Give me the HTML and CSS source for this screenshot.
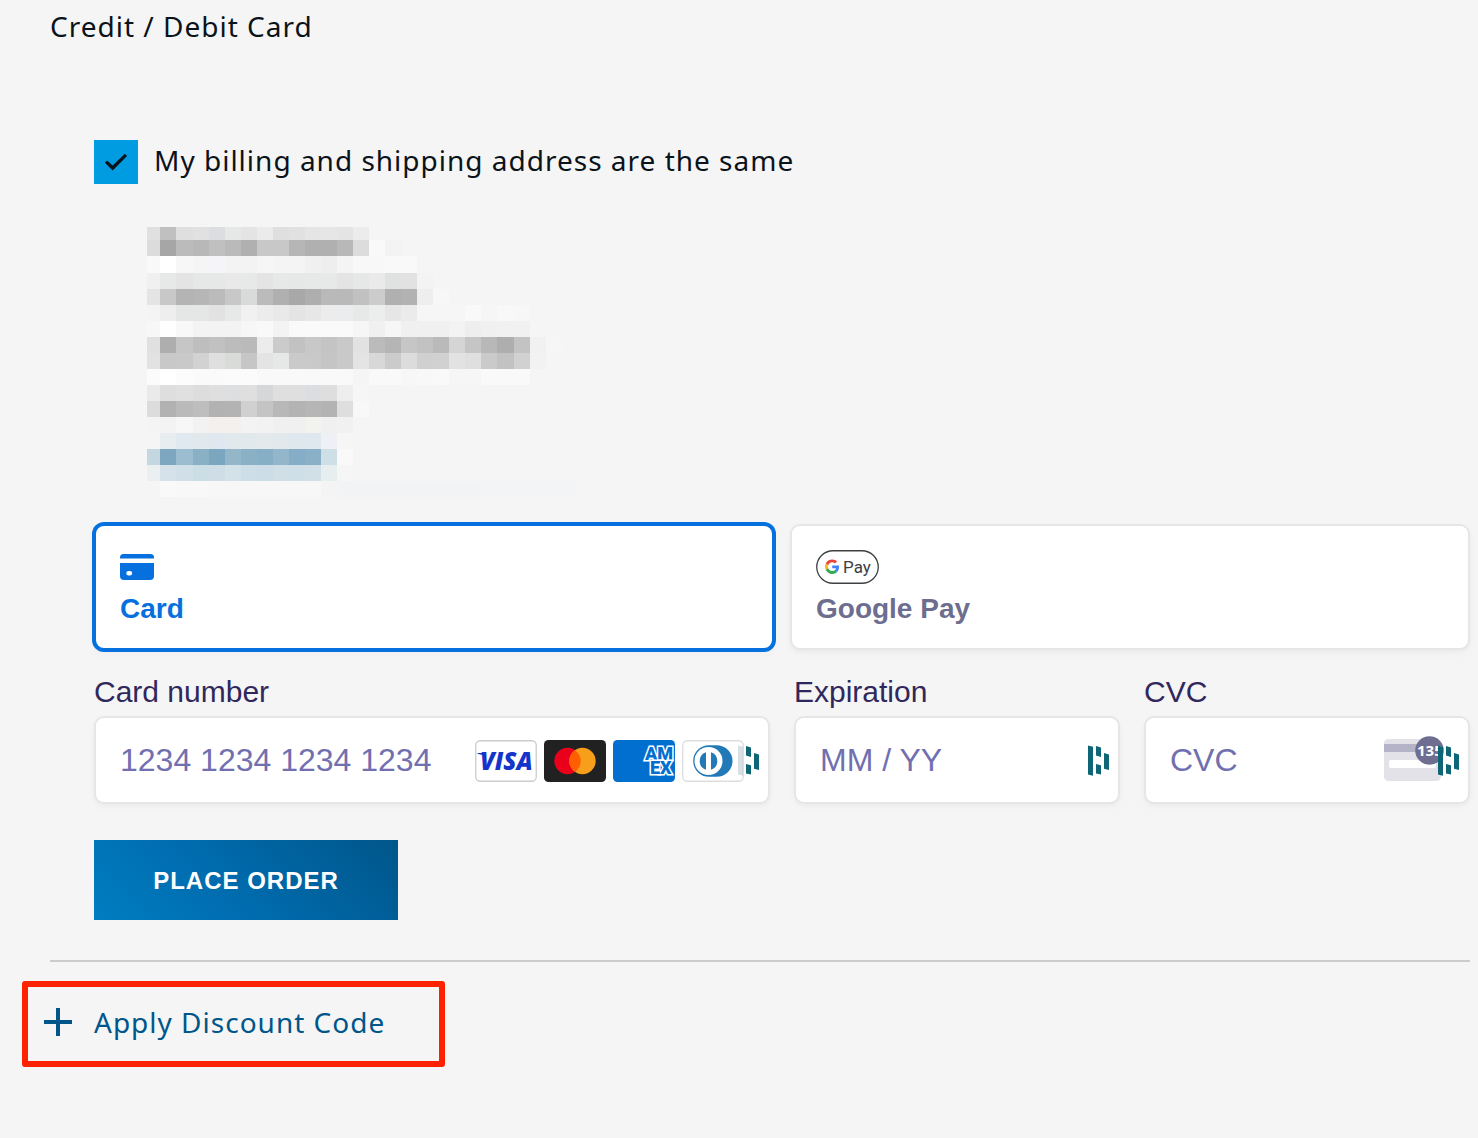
FILE: index.html
```html
<!DOCTYPE html>
<html lang="en">
<head>
  <meta charset="UTF-8" />
  <meta name="viewport" content="width=device-width, initial-scale=1" />
  <title>Checkout</title>
  <link rel="stylesheet" href="styles.css">
</head>
<body>
  <main class="checkout">
    <h1>Credit / Debit Card</h1>

    <form class="payment-form">
      <label class="same-address" for="sameAddress">
        <input type="checkbox" id="sameAddress" checked />
        My billing and shipping address are the same
      </label>

      <svg class="address" id="address" viewBox="0 0 430 270" role="img" aria-label="Hidden address"></svg>

      <div class="methods" role="tablist">
        <button type="button" class="method active" role="tab" aria-selected="true">
          <svg class="card-icon" viewBox="0 0 34 26" aria-hidden="true">
            <path d="M0 4.6V3.5Q0 0 3.500 0h27Q34 0 34 3.500v1.100z" />
            <path fill-rule="evenodd" d="M0 9h34v13q0 4-4 4H4q-4 0-4-4zM8.500 17h1.500a2.200 2.200 0 0 1 0 4.400h-1.500a2.200 2.200 0 0 1 0-4.400z" />
          </svg>
          <span>Card</span>
        </button>
        <button type="button" class="method" role="tab" aria-selected="false">
          <svg class="gpay-icon" viewBox="0 0 63 34" aria-hidden="true">
            <rect x=".75" y=".75" width="61.500" height="32.500" rx="16.250" fill="#fff" stroke="#3c4043" stroke-width="1.300" />
            <g transform="translate(9 9.500) scale(.3)">
              <path fill="#ea4335" d="M24 9.500c3.540 0 6.710 1.220 9.210 3.600l6.850-6.850C35.900 2.380 30.470 0 24 0 14.620 0 6.510 5.380 2.560 13.220l7.980 6.190C12.430 13.720 17.740 9.500 24 9.500z" />
              <path fill="#4285f4" d="M46.980 24.550c0-1.570-.15-3.090-.38-4.550H24v9.020h12.940c-.58 2.960-2.260 5.480-4.780 7.180l7.730 6c4.510-4.180 7.090-10.360 7.090-17.650z" />
              <path fill="#fbbc04" d="M10.530 28.590A14.500 14.500 0 0 1 9.770 24c0-1.600.27-3.140.76-4.590l-7.980-6.190A24 24 0 0 0 0 24c0 3.880.92 7.540 2.560 10.780z" />
              <path fill="#34a853" d="M24 48c6.480 0 11.930-2.130 15.890-5.810l-7.730-6c-2.150 1.450-4.920 2.300-8.160 2.300-6.260 0-11.570-4.220-13.470-9.910l-7.980 6.190C6.510 42.620 14.620 48 24 48z" />
            </g>
            <text x="27" y="23" class="gpay-text">Pay</text>
          </svg>
          <span>Google Pay</span>
        </button>
      </div>

      <div class="fields">
        <div class="field field-wide">
          <label for="cardNumber">Card number</label>
          <div class="control">
            <input type="text" id="cardNumber" placeholder="1234 1234 1234 1234" />
            <div class="brands">
              <svg viewBox="0 0 62 42" aria-hidden="true">
                <rect x=".75" y=".75" width="60.500" height="40.500" rx="4.500" fill="#fff" stroke="#ccc" stroke-width="1.300" />
                <text x="5" y="30" class="visa-text">VISA</text>
                <path fill="#1434cb" d="M2.500 13h6l1.500 3.500q-3-2-7.500-2.700z" />
              </svg>
              <svg viewBox="0 0 62 42" aria-hidden="true">
                <rect width="62" height="42" rx="4.500" fill="#212121" />
                <circle cx="23.500" cy="21" r="13.200" fill="#eb001b" />
                <circle cx="38.500" cy="21" r="13.200" fill="#f79e1b" />
                <path fill="#ff5f00" d="M31 10.140a13.200 13.200 0 0 1 0 21.720a13.200 13.200 0 0 1 0-21.720z" />
              </svg>
              <svg viewBox="0 0 62 42" aria-hidden="true">
                <rect width="62" height="42" rx="4.500" fill="#016fd0" />
                <text class="amex-text"><tspan x="32" y="20">AM</tspan><tspan x="37" y="34">EX</tspan></text>
              </svg>
              <svg viewBox="0 0 62 42" aria-hidden="true">
                <rect x=".75" y=".75" width="60.500" height="40.500" rx="4.500" fill="#fff" stroke="#ddd" stroke-width="1.300" />
                <path fill="#2179b8" d="M27 5.200h7.500a16 15.800 0 0 1 0 31.600H27a15.800 15.800 0 0 1 0-31.600z" />
                <circle cx="26.500" cy="21" r="14" fill="#fff" />
                <path fill="#2179b8" d="M24 12.200v17.600a9.300 9.300 0 0 1 0-17.600zM29 12.200v17.600a9.300 9.300 0 0 0 0-17.600z" />
              </svg>
            </div>
            <svg class="manager" viewBox="0 0 22 31" aria-hidden="true">
              <path class="faded" d="M0 .5l5 1.200v29L0 29.500z" />
              <path d="M8 1l5 1.500v9.500l-5-1.500zM8 19l5 1.200v9.300l-5-1zM16 8l5 1.500v15.500l-5-1.200z" />
            </svg>
          </div>
        </div>

        <div class="field">
          <label for="expiration">Expiration</label>
          <div class="control">
            <input type="text" id="expiration" placeholder="MM / YY" />
            <svg class="manager" viewBox="0 0 22 31" aria-hidden="true">
              <path d="M0 .5l5 1.200v29L0 29.500zM8 1l5 1.500v9.500l-5-1.500zM8 19l5 1.200v9.300l-5-1zM16 8l5 1.500v15.500l-5-1.200z" />
            </svg>
          </div>
        </div>

        <div class="field">
          <label for="cvc">CVC</label>
          <div class="control">
            <input type="text" id="cvc" placeholder="CVC" />
            <svg class="cvc-icon" viewBox="0 0 60 46" aria-hidden="true">
              <rect y="3" width="57" height="42" rx="4.500" fill="#e3e2e9" />
              <path fill="#b5b3c7" d="M0 8h57v8H0z" />
              <rect x="5" y="24" width="47" height="8" rx="2" fill="#fff" />
              <circle cx="45.500" cy="14.500" r="14.300" fill="#6f6e91" />
              <text x="33" y="20" class="cvc-text">135</text>
            </svg>
            <svg class="manager" viewBox="0 0 22 31" aria-hidden="true">
              <path d="M0 .5l5 1.200v29L0 29.500zM8 1l5 1.500v9.500l-5-1.500zM8 19l5 1.200v9.300l-5-1zM16 8l5 1.500v15.500l-5-1.200z" />
            </svg>
          </div>
        </div>
      </div>

      <button type="submit" class="place-order">PLACE ORDER</button>
    </form>

    <hr />

    <button type="button" class="discount">
      <svg viewBox="0 0 28 28" aria-hidden="true">
        <path d="M12 0h4v12h12v4H16v12h-4V16H0v-4h12z" />
      </svg>
      Apply Discount Code
    </button>
  </main>

  <script src="address.js"></script>
</body>
</html>
```
FILE: address.js
```js
// One string per mosaic row, one colour per tile. Two digits is a grey, "-" is empty.
const rows = [
  'e0 c0 df e1 dcdde0 e5e8e7 e4 eb df e1 e5 e6 e4 ec',
  'dc a6 bb b8 c0 ba b0 c8 c8 b6 b0 b0 b8 dc f9 f3',
  'f9 ff f7 f5 f4f4f9 f3 f3 f6 f4 f4 f0 ee f4 f8 f8 f9 f9',
  'f0 e6e9e8 e4 e5e8e7 e5e8e7 e9 e6e9e8 e4 e6e9e8 e5e8e7 e6e9e8 e6e9e8 e4 e5e8e7 ea dfe2e0 e2 f3',
  'e4 c8 b4 b6 bb c8 d8dbd9 bb b0 a8 ae b9 b9 c1 cc b0 b2 ee f7',
  'f4 ee e4e7e5 e4e7e5 e2 e6e9e8 f1 ec e9 e4 e7 ec ebecee e7e9e8 ebeeed e6 eb f6 f6 f6 f9 f6 f8 f7',
  'f7 fe f8 f3 f3 f3 f7 f9 f3 fa fa fa fa f6 f0 f6 f0 f0 f0 f3 ee f0 f1 f1',
  'e0 ae c6 be c1 bc ba ec cb c2 c8 c4 c9 e2 bb b5 c6 c2 ba d5 c5 b8 ae c3 f1 f6',
  'e2 c8 c9 d2 df d9dbd9 c6 e4 e5e8e7 ca c9 c5 c9 e4 d8 cb dc d0 d1 e2 df ca c2 d1 f2',
  'fb ff fc fa fa fb fb f9 f9 f9 f9 f9 f9 f5 f9 f9 f7 f8 f9 f6 f6 f9 f9 f9',
  'ea de e0 dd df dcdee0 df d5d7d9 df df dcdde0 de ee f6',
  'dc b2 ba be b2 b3 d0 c4 b8 b3 b6 b3 de f8',
  'f4 f3 f7 f2 f3f0ed f3f0ed f3 f2 f0 f0 f2f2ef f0 f1',
  '- e8eef0 e0e9ef e2e9ed e0e7f0 e2e9ec e2e9ec e4e9ec e2e9ec dfe8ef dfe8ef eff0f5 f6',
  'c4d6df 7da7c0 9bbdcf 8ab0c6 7ba6bf 93b6c9 8ab0c6 86aec6 93b6ca 85adc8 8ab0c8 cfdfe6 f9',
  'eceff2 d5e2ea d0dfe8 cbdde5 cfdee6 d3e1e8 cddee8 ccdde7 d0dfe6 cfdfe8 d1e0e6 e7eeef f6',
  'f5 f9 f8 f8 f7 f7 f7 f7 f7 f7 f7 f4 f2f3f5 f2f3f5 f2f3f5 f2f3f5 f2f3f5 f2f3f5 f2f3f5 f2f3f5 f2f3f5 f3f4f5 f3f4f5 f3f4f5 f3f4f5 f3f4f5 f3f4f5'
];

const TILE = 16.05;
const FIRST = 13.4;
const address = document.getElementById('address');

rows.forEach((row, r) => {
  row.split(' ').forEach((color, c) => {
    if (color === '-') return;
    const rect = document.createElementNS('http://www.w3.org/2000/svg', 'rect');
    rect.setAttribute('x', c ? FIRST + (c - 1) * TILE : 0);
    rect.setAttribute('y', r ? FIRST + (r - 1) * TILE : 0);
    rect.setAttribute('width', c ? TILE : FIRST);
    rect.setAttribute('height', r ? TILE : FIRST);
    rect.setAttribute('fill', '#' + (color.length === 2 ? color.repeat(3) : color));
    address.appendChild(rect);
  });
});
```
FILE: styles.css
```css
* {
  box-sizing: border-box;
}

body {
  margin: 0;
  background: #f5f5f5;
  font-family: "Liberation Sans", Arial, sans-serif;
}

button,
input {
  font-family: inherit;
}

.checkout {
  padding: 8px 8px 72px 50px;
}

h1 {
  margin: 0;
  font-family: "Noto Sans", sans-serif;
  font-size: 28px;
  font-weight: 400;
  line-height: 36px;
  letter-spacing: 1px;
  color: #0b131a;
}

.payment-form {
  margin-top: 96px;
  padding-left: 44px;
}

.same-address {
  display: flex;
  align-items: flex-start;
  gap: 16px;
  font-family: "Noto Sans", sans-serif;
  font-size: 28px;
  line-height: 40px;
  letter-spacing: 1px;
  color: #0b131a;
}

.same-address input {
  appearance: none;
  width: 44px;
  height: 44px;
  margin: 0;
  background: #009ce2;
  display: grid;
  place-items: center;
}

.same-address input:checked::before {
  content: "";
  width: 24px;
  height: 20px;
  background: #0b131a;
  clip-path: polygon(4% 54%, 13% 43%, 36% 68%, 87% 9%, 96% 20%, 36% 92%);
}

.address {
  display: block;
  width: 430px;
  height: 270px;
  margin: 43px 0 27px 53px;
  shape-rendering: crispEdges;
}

.methods {
  display: grid;
  grid-template-columns: 1fr 1fr;
  gap: 16px;
}

.method {
  display: flex;
  flex-direction: column;
  align-items: flex-start;
  gap: 8px;
  height: 126px;
  padding: 24px 24px 20px;
  background: #fff;
  border: 2px solid #e6e6e6;
  border-radius: 10px;
  box-shadow: 0 2px 4px rgba(0, 0, 0, 0.03), 0 4px 12px rgba(0, 0, 0, 0.02);
  color: #6d6e8f;
  font-size: 28px;
  font-weight: 700;
  line-height: 34px;
  cursor: pointer;
}

.method svg {
  flex: none;
  height: 34px;
}

.method.active {
  border-color: #0570de;
  box-shadow: 0 0 0 2px #0570de, 0 4px 12px rgba(0, 0, 0, 0.03);
  color: #0570de;
}

.card-icon {
  width: 34px;
  fill: #0570de;
}

.gpay-icon {
  width: 63px;
}

.gpay-text {
  font-family: Roboto, sans-serif;
  font-size: 17px;
  font-weight: 400;
  fill: #3c4043;
}

.fields {
  display: grid;
  grid-template-columns: repeat(4, 1fr);
  gap: 24px;
  margin-top: 24px;
}

.field-wide {
  grid-column: span 2;
}

.field label {
  display: block;
  margin-bottom: 6px;
  font-size: 30px;
  line-height: 36px;
  color: #30285c;
}

.control {
  position: relative;
}

.control input {
  display: block;
  width: 100%;
  height: 88px;
  padding: 0 24px;
  background: #fff;
  border: 2px solid #e6e6e6;
  border-radius: 10px;
  box-shadow: 0 2px 4px rgba(0, 0, 0, 0.03), 0 4px 12px rgba(0, 0, 0, 0.02);
  font-size: 32px;
  color: #30285c;
}

.control input::placeholder {
  color: #716fb0;
  opacity: 1;
}

.control input:focus {
  border-color: #0570de;
  outline: none;
}

.brands {
  position: absolute;
  top: 24px;
  right: 26px;
  display: flex;
  gap: 7px;
}

.brands svg {
  width: 62px;
  height: 42px;
}

.visa-text {
  font-family: "Open Sans", sans-serif;
  font-size: 24px;
  font-style: italic;
  font-weight: 800;
  fill: #1434cb;
}

.amex-text {
  font-family: Roboto, sans-serif;
  font-size: 18px;
  font-weight: 900;
  fill: #016fd0;
  stroke: #fff;
  stroke-width: 3px;
  paint-order: stroke;
}

.manager {
  position: absolute;
  top: 29px;
  right: 10px;
  width: 22px;
  height: 31px;
  fill: #0e6575;
}

.manager .faded {
  fill: #9fb0bb;
  opacity: 0.4;
}

.cvc-icon {
  position: absolute;
  top: 20px;
  right: 26px;
  width: 60px;
  height: 46px;
}

.cvc-text {
  font-family: "Noto Sans", sans-serif;
  font-size: 15px;
  font-weight: 700;
  fill: #fff;
}

.place-order {
  display: block;
  width: 304px;
  height: 80px;
  margin-top: 36px;
  padding: 2px 0 0;
  border: none;
  background: linear-gradient(45deg, #007dc1, #006db0 40%, #00568a);
  color: #fff;
  font-size: 24px;
  font-weight: 700;
  letter-spacing: 1px;
  cursor: pointer;
}

hr {
  margin: 40px 0 19px;
  border: none;
  border-top: 2px solid #ccc;
}

.discount {
  display: flex;
  align-items: center;
  gap: 22px;
  height: 86px;
  margin-left: -28px;
  padding: 0 54px 4px 16px;
  background: none;
  border: 6px solid #ff2200;
  border-radius: 3px;
  font-family: "Noto Sans", sans-serif;
  font-size: 28px;
  letter-spacing: 1px;
  color: #00568a;
  cursor: pointer;
}

.discount svg {
  width: 28px;
  height: 28px;
  fill: #00568a;
}
```
